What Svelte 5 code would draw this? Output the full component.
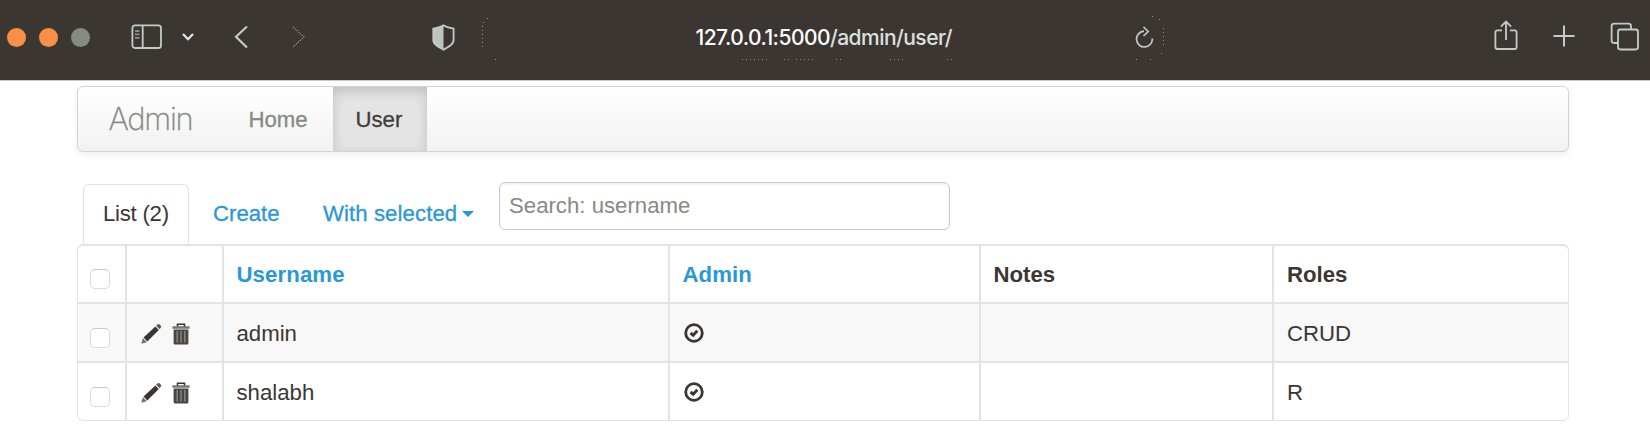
<script>
  const rows = [
    { username: 'admin', admin: true, notes: '', roles: 'CRUD' },
    { username: 'shalabh', admin: true, notes: '', roles: 'R' }
  ];
</script>

<div class="browser">
  <header class="toolbar">
    <div class="lights">
      <span class="light"></span><span class="light"></span><span class="light off"></span>
    </div>
    <svg class="sidebar" width="32" height="26" viewBox="0 0 32 26" fill="none" stroke="#c4cbc5" stroke-width="1.8">
      <rect x="1.4" y="1.4" width="28.6" height="22.6" rx="2.6" />
      <path d="M11.7 1.5V24" />
      <path d="M4 7.2h4.4M4 10.4h4.4M4 13.8h4.4" stroke="#8e958e" />
    </svg>
    <svg class="down" width="14" height="10" viewBox="0 0 14 10" fill="none" stroke="#e5e8e5" stroke-width="2.2">
      <path d="M2 2l5 5.2L12 2" />
    </svg>
    <svg class="back" width="15" height="24" viewBox="0 0 15 24" fill="none" stroke="#c4cbc5" stroke-width="2.2">
      <path d="M13 1.5L2 11.8L13 22.5" />
    </svg>
    <svg class="forward" width="14" height="22" viewBox="0 0 14 22" fill="none" stroke="#8e958e" stroke-width="1.1" stroke-dasharray="1.4 1">
      <path d="M1 1L12 11L1 21" />
    </svg>
    <svg class="shield" width="23" height="27" viewBox="0 0 23 27">
      <path d="M11.5 1.2C8.5 3.4 5 4 1.2 4.6V16c0 4.6 5.7 7.6 10.3 9.9z" fill="#bdc4be" />
      <path d="M11.5 1.3C14.5 3.4 18 4 21.6 4.6V16c0 4.6-5.6 7.4-10.1 9.7C7 23.4 1.3 20.6 1.3 16V4.6C5 4 8.5 3.4 11.5 1.3z" fill="none" stroke="#c4cbc5" stroke-width="1.8" />
    </svg>
    <div class="address">
      <svg class="outline" width="684" height="46" viewBox="0 0 684 46" fill="none" stroke="#8e958e" stroke-width="1">
        <path d="M.5 10v21" stroke-dasharray="1 3" />
        <path d="M1 6.5h1M5 2.5h1M13 43.5h1" />
        <path d="M260 43.5h28M302 43.5h6M314 43.5h17M354 43.5h7M408 43.5h16M465 43.5h7" stroke-dasharray="1 3" />
        <path d="M654 43.5h1M668 43.5h1M670 .5h1M677 3.5h1M679 37.5h1" />
        <path d="M681.5 12v17" stroke-dasharray="1 3" />
      </svg>
      <span class="url">127.0.0.1:5000<span>/admin/user/</span></span>
      <svg class="reload" width="19" height="22" viewBox="0 0 19 22" fill="none" stroke="#c4cbc5" stroke-width="1.7">
        <path d="M9 5.2A7.9 7.9 0 1 0 17.3 12.5" />
        <path d="M8.5 1L13.2 5.5L8.5 10" />
      </svg>
    </div>
    <svg class="share" width="24" height="31" viewBox="0 0 24 31" fill="none" stroke="#c4cbc5" stroke-width="1.8">
      <path d="M8 10.3H3.4a2 2 0 0 0-2 2V27a2 2 0 0 0 2 2H20.6a2 2 0 0 0 2-2V12.3a2 2 0 0 0-2-2H16" />
      <path d="M12 20V2M6.9 6.7L12 1.5L17.1 6.7" />
    </svg>
    <svg class="plus" width="22" height="22" viewBox="0 0 22 22" fill="none" stroke="#c4cbc5" stroke-width="2">
      <path d="M11 .5v21M.5 11h21" />
    </svg>
    <svg class="tabs-icon" width="30" height="29" viewBox="0 0 30 29" fill="none" stroke="#c4cbc5" stroke-width="1.8">
      <path d="M8 21H4a2.4 2.4 0 0 1-2.4-2.4V4A2.4 2.4 0 0 1 4 1.6H18.5A2.4 2.4 0 0 1 21 4V7" />
      <rect x="8" y="7.5" width="20" height="20" rx="2.4" />
    </svg>
  </header>

  <main>
    <nav>
      <span class="brand">Admin</span>
      <span class="item">Home</span>
      <span class="item active">User</span>
    </nav>

    <div class="actions">
      <span class="tab">List (2)</span>
      <span class="link create">Create</span>
      <span class="link with">With selected<i class="caret"></i></span>
      <span class="search">Search: username</span>
    </div>

    <div class="table">
      <div class="row head">
        <div class="check"><i></i></div>
        <div></div>
        <div class="blue">Username</div>
        <div class="blue">Admin</div>
        <div>Notes</div>
        <div>Roles</div>
      </div>
      {#each rows as row, i}
        <div class="row" class:odd={i % 2 === 0}>
          <div class="check"><i></i></div>
          <div class="tools">
            <svg width="21" height="22" viewBox="0 0 21 22">
              <path d="M.3 20.8l1.5-5.6 4 4z" fill="#6d716a" />
              <path d="M2.5 14.6L14.4 3.6l3.4 3.4L6.3 18.6z" fill="#3c3633" />
              <path d="M15.2 2.8l1.3-1.3c.8-.7 1.5-.6 2.2.1l1 1c.7.7.7 1.5 0 2.2L18.6 6.2z" fill="#5a5a55" />
            </svg>
            <svg width="18" height="22" viewBox="0 0 18 22" fill="none">
              <path d="M5.5 4V1.2h7V4" stroke="#3c3633" stroke-width="1.6" />
              <path d="M.4 4.5h17.2" stroke="#747a73" stroke-width="2.4" />
              <path d="M1.6 6.5h14.8V20q0 1.5-1.5 1.5H3.1q-1.5 0-1.5-1.5z" fill="#4a4743" />
              <path d="M5.2 8V19.5M9 8V19.5M12.8 8V19.5" stroke="#858b83" stroke-width="1.4" />
            </svg>
          </div>
          <div>{row.username}</div>
          <div>
            {#if row.admin}
              <svg class="ok" width="20" height="20" viewBox="0 0 20 20" fill="none" stroke="#3c3633">
                <circle cx="10" cy="10" r="8.3" stroke-width="2.8" />
                <path d="M6.5 10L9.2 12.2L13.3 7.8" stroke-width="3" />
              </svg>
            {/if}
          </div>
          <div>{row.notes}</div>
          <div>{row.roles}</div>
        </div>
      {/each}
    </div>
  </main>
</div>

<style>
  :global(body) { background: #fff; }
  .browser { height: 431px; overflow: hidden; font: 22.2px/26px "Liberation Sans", Arial, sans-serif; color: #3c3633; }
  svg { display: block; flex: none; }

  .toolbar { box-sizing: border-box; height: 81px; display: flex; align-items: flex-start; background: #3c3633; border-bottom: 1px solid #c9c9cb; }
  .lights { display: flex; gap: 13px; margin: 28px 0 0 7px; }
  .light { width: 19px; height: 19px; border-radius: 50%; background: #f98f45; }
  .light.off { background: #858b83; }
  .sidebar { margin: 24px 0 0 41px; }
  .down { margin: 32px 0 0 18px; }
  .back { margin: 25px 0 0 39px; }
  .forward { margin: 26px 0 0 43px; }
  .shield { margin: 24px 0 0 126px; }
  .address { position: relative; display: flex; width: 684px; height: 46px; margin: 16px 0 0 27px; }
  .outline { position: absolute; inset: 0; }
  .url { width: 260px; margin: 9px 0 0 213.5px; white-space: nowrap; font-family: Inter, sans-serif; font-size: 21px; font-weight: 500; letter-spacing: -0.53px; color: #fff; }
  .url span { color: #dde1dd; }
  .reload { margin: 10px 0 0 179.5px; }
  .share { margin: 20px 0 0 328px; }
  .plus { margin: 25px 0 0 35px; }
  .tabs-icon { margin: 22px 0 0 35px; }

  main { width: 1492px; margin: 5px 0 0 76.5px; }
  nav { box-sizing: border-box; height: 66px; display: flex; align-items: stretch; border: 1.5px solid #d2d3d4; border-radius: 6px; background: linear-gradient(#fff, #f2f2f2); box-shadow: 0 2px 6px rgba(0, 0, 0, 0.08); line-height: 65px; color: #858b83; overflow: hidden; }
  .brand { box-sizing: border-box; width: 148px; padding-left: 31px; font-family: Inter, sans-serif; font-weight: 200; font-size: 31px; line-height: 63px; letter-spacing: -1.3px; -webkit-text-stroke: 0.3px #858b83; }
  .item { box-sizing: border-box; width: 107px; padding-left: 23px; -webkit-text-stroke: 0.3px; }
  .item.active { width: 94px; padding-left: 23px; background: #e4e4e5; color: #3c3f39; box-shadow: inset 0 4px 12px rgba(0, 0, 0, 0.16); }

  .actions { display: flex; height: 92px; line-height: 26px; }
  .tab { box-sizing: border-box; width: 106px; height: 60px; margin: 32px 0 0 6.5px; padding: 16px 0 0 19px; border: 1.5px solid #e2e2e3; border-bottom: 0; border-radius: 6px 6px 0 0; letter-spacing: -0.25px; }
  .link { margin-top: 49px; color: #2b98d6; white-space: nowrap; -webkit-text-stroke: 0.3px #2b98d6; }
  .create { width: 110px; margin-left: 24px; }
  .with { width: 176px; display: flex; align-items: center; height: 26px; letter-spacing: 0.08px; }
  .caret { margin-left: 5px; border: 6px solid transparent; border-top-color: #2b98d6; border-bottom: 0; }
  .search { box-sizing: border-box; width: 451px; height: 48px; margin: 30px 0 0 0; padding: 10px 0 0 9px; border: 1.5px solid #c8cacb; border-radius: 6px; box-shadow: inset 0 2px 2px rgba(0, 0, 0, 0.05); color: #858b83; }

  .table { box-sizing: border-box; width: 1492px; border: 1.5px solid #e3e3e4; border-top-width: 2px; border-radius: 6px; overflow: hidden; }
  .row { display: grid; grid-template-columns: 47px 97px 446px 311px 293.5px 1fr; height: 57px; border-top: 2px solid #e3e3e4; }
  .row.head { height: 56px; border-top: 0; font-weight: 700; }
  .row.odd { background: #f8f8f8; }
  .row > div { display: flex; align-items: center; padding: 1px 0 0 13px; border-left: 2px solid #e3e3e4; }
  .row:not(.head) > div { padding-top: 2px; }
  .row > div:first-child { border-left: 0; }
  .blue { color: #2b98d6; letter-spacing: 0.1px; }
  .row .check { padding-left: 12px; }
  .check i { box-sizing: border-box; width: 20px; height: 20px; margin-top: 8px; border: 1.5px solid #dadbdc; border-top-color: #c8cacb; border-radius: 5px; background: #fff; }
  .row .tools { gap: 10px; padding-left: 14px; }
  .ok { margin: -2px 0 0 1.5px; }
</style>
